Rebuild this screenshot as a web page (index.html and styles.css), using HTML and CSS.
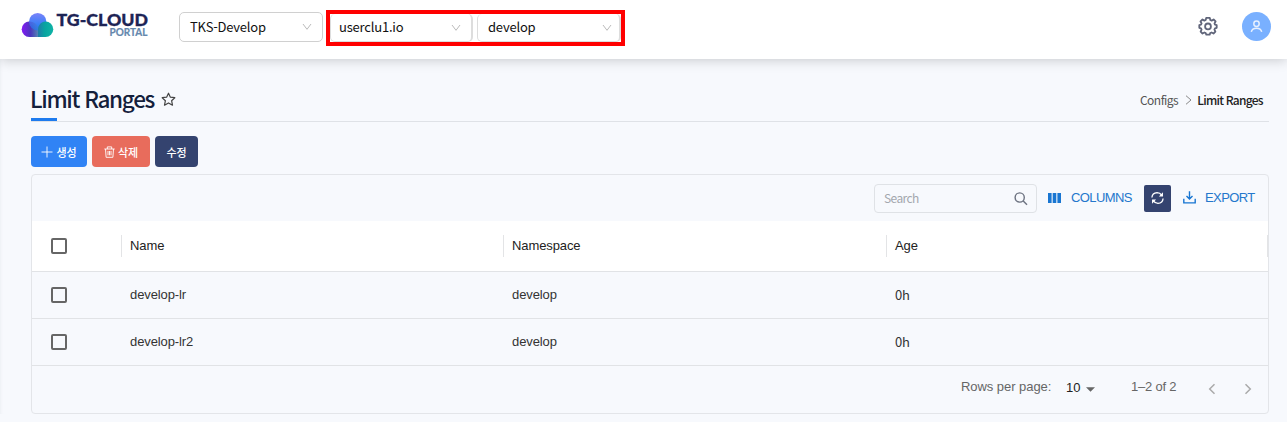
FILE: index.html
```html
<!DOCTYPE html>
<html lang="ko">
<head>
<meta charset="utf-8">
<title>Limit Ranges</title>
<link rel="stylesheet" href="styles.css">
</head>
<body>
<header class="topbar">
  <svg class="logo" width="128" height="32" viewBox="0 0 128 32">
    <defs>
      <linearGradient id="top" x1="0" y1="0" x2="0" y2="1"><stop offset="0" stop-color="#7b83fa"/><stop offset="1" stop-color="#167cf4"/></linearGradient>
      <linearGradient id="left" x1="0" y1="0" x2="1" y2="0"><stop offset="0" stop-color="#8418f5"/><stop offset=".55" stop-color="#4a38bc"/><stop offset="1" stop-color="#5686b4"/></linearGradient>
      <linearGradient id="right" x1="0" y1="0" x2="1" y2="0"><stop offset="0" stop-color="#217ba9"/><stop offset=".45" stop-color="#08a5a0"/><stop offset="1" stop-color="#10b3a6"/></linearGradient>
    </defs>
    <path d="M7.500 10.500h1.500c4 0 7 4 7 8V26H7.500a7.700 7.700 0 0 1 0-15.500Z" fill="url(#left)"/>
    <circle cx="15.700" cy="10.700" r="8.700" fill="url(#top)"/>
    <path d="M7.500 10.500c5 0 9 3.500 9 9V26h-9a7.700 7.700 0 0 1 0-15.500Z" fill="url(#left)" opacity=".35"/>
    <path d="M23.500 10.500a7.700 7.700 0 0 1 0 15.500H16v-7.500c0-4 3-8 7.500-8Z" fill="url(#right)"/>
    <text class="logo-name" x="34.500" y="14.500" textLength="91.500" lengthAdjust="spacingAndGlyphs">TG-CLOUD</text>
    <text class="logo-sub" x="87.500" y="25" textLength="38" lengthAdjust="spacingAndGlyphs">PORTAL</text>
  </svg>
  <div class="select project"><span>TKS-Develop</span><svg width="10" height="8" viewBox="0 0 10 8"><path d="M1 1l4 5.300L9 1"/></svg></div>
  <div class="scope">
    <div class="select cluster"><span>userclu1.io</span><svg width="10" height="8" viewBox="0 0 10 8"><path d="M1 1l4 5.300L9 1"/></svg></div>
    <div class="select"><span>develop</span><svg width="10" height="8" viewBox="0 0 10 8"><path d="M1 1l4 5.300L9 1"/></svg></div>
  </div>
  <svg class="gear" width="20" height="20" viewBox="0 0 20 20"><path d="M8.200 1.900h3.600l.5 2.100 1.400.6 1.900-1.100 2 2-1.100 1.900.5 1.300 1.700.5v2.600l-1.700.6-.6 1.300 1 1.900-1.900 1.900-1.900-1-1.400.6-.5 1.600H8.300l-.6-1.600-1.300-.6-1.900 1-1.900-1.900 1-1.900-.6-1.300-1.700-.6V9.200L3 8.700l.6-1.300-1.100-1.900 2-2 1.900 1.100L7.700 4Z"/><circle cx="10" cy="10.400" r="2.900"/></svg>
  <div class="avatar"><svg width="13" height="13" viewBox="0 0 14 14"><circle cx="7" cy="4" r="2.900"/><path d="M1.400 12.900c.5-2.500 2.900-4 5.600-4s5.100 1.500 5.600 4"/></svg></div>
</header>
<main class="content">
  <div class="heading">
    <h1>Limit Ranges</h1>
    <svg class="star" width="15" height="15" viewBox="0 0 15 15"><path d="M7.500 1.200l1.900 4 4.400.5-3.200 3 .9 4.500-4-2.300-4 2.300.9-4.500-3.200-3 4.400-.5Z"/></svg>
    <nav class="crumbs"><span>Configs</span><svg width="7" height="10" viewBox="0 0 7 10"><path d="M1 .7l5 4.300-5 4.300"/></svg><b>Limit Ranges</b></nav>
  </div>
  <div class="actions">
    <button class="btn create"><svg width="12" height="12" viewBox="0 0 12 12"><path d="M6 .5v11M.5 6h11"/></svg>생성</button>
    <button class="btn remove"><svg width="11" height="12" viewBox="0 0 11 12"><path d="M.3 3h10.400M3.300 3V.9h4.400V3M1.500 3l.6 8.300h6.800L9.500 3M4 5v4.300M5.500 5v4.300M7 5v4.300"/></svg>삭제</button>
    <button class="btn edit">수정</button>
  </div>
  <section class="card">
    <div class="tools">
      <div class="search"><span>Search</span><svg width="14" height="14" viewBox="0 0 14 14"><circle cx="5.700" cy="5.500" r="4.600"/><path d="M9 8.800l4 4"/></svg></div>
      <svg class="columns-icon" width="13" height="10" viewBox="0 0 13 10"><path d="M0 0h3.600v10H0zM4.700 0h3.600v10H4.700zM9.400 0H13v10H9.400z"/></svg>
      <span class="link columns">COLUMNS</span>
      <div class="refresh"><svg width="14" height="14" viewBox="0 0 14 14"><path d="M1 6.500C1.200 3.500 3.600 1.400 6.500 1.200c2.200 0 3.800.9 5 2.600M13 7.500c-.2 3-2.600 5.100-5.500 5.300-2.200 0-3.800-.9-5-2.600"/><path class="tip" d="M12.900.8v4.500H8.500ZM1.100 13.200V8.700h4.400Z"/></svg></div>
      <svg class="export-icon" width="13" height="13" viewBox="0 0 13 13"><path d="M6.500.3v7.500M3.500 5l3 3 3-3M.8 7.700v4.200h11.400V7.700"/></svg>
      <span class="link export">EXPORT</span>
    </div>
    <div class="row head"><i class="box"></i><div class="cell">Name</div><div class="cell">Namespace</div><div class="cell last">Age</div></div>
    <div class="row"><i class="box"></i><div class="cell">develop-lr</div><div class="cell">develop</div><div class="cell age">0h</div></div>
    <div class="row"><i class="box"></i><div class="cell">develop-lr2</div><div class="cell">develop</div><div class="cell age">0h</div></div>
    <div class="pager">
      <span class="label">Rows per page:</span><span class="size">10</span>
      <svg class="caret" width="9" height="5" viewBox="0 0 10 5"><path d="M0 0h10L5 5Z"/></svg>
      <span class="range">1–2 of 2</span>
      <svg class="arrow" width="8" height="12" viewBox="0 0 8 12"><path d="M6.500 1.200L1.700 6l4.800 4.800"/></svg>
      <svg class="arrow next" width="8" height="12" viewBox="0 0 8 12"><path d="M1.500 1.200L6.300 6l-4.800 4.800"/></svg>
    </div>
  </section>
</main>
</body>
</html>
```
FILE: styles.css
```css
* { box-sizing: border-box; }
body { margin: 0; height: 422px; overflow: hidden; background: #f7f9fd; font-family: "Noto Sans CJK KR", sans-serif; color: #222; }
svg { flex: none; fill: none; overflow: visible; }
.topbar { position: relative; display: flex; align-items: flex-start; height: 59px; padding-left: 22px; background: #fff; box-shadow: 0 1px 12px rgba(0,0,0,.2); }
.logo { margin-top: 11px; }
.logo-name { font: 900 17px Lato, sans-serif; fill: #1d2455; stroke: #1d2455; stroke-width: .3px; }
.logo-sub { font: 700 10.500px Lato, sans-serif; fill: #6487ad; stroke: #6487ad; stroke-width: .2px; }
.select { display: flex; align-items: center; justify-content: space-between; width: 144px; height: 30px; padding: 0 10px; border: 1px solid #d0d0d0; border-radius: 5px; background: #fff; font-size: 13px; letter-spacing: -.2px; color: #111; }
.select span { padding-bottom: 2px; }
.select svg { stroke: #bbb; }
.project { margin: 12px 0 0 29px; }
.scope { display: flex; gap: 4px; width: 299px; height: 36px; margin: 10px 0 0 3px; border: 4px solid #f00; }
.scope .select { height: 28px; border-width: 0 2px 1px 1px; border-color: #ddd; }
.scope .cluster { width: 143px; padding-left: 8px; }
.scope .select:last-child { padding-right: 7px; }
.gear { margin: 16px 0 0 573px; stroke: #60657a; stroke-width: 1.800; stroke-linejoin: round; }
.avatar { display: flex; align-items: center; justify-content: center; width: 29px; height: 29px; margin: 12px 0 0 24px; border-radius: 50%; background: #79b0ff; }
.avatar svg { stroke: #e6f0ff; stroke-width: 1.600; }
.content { padding: 19px 18px 0 31px; box-shadow: inset 3px 0 3px -2px #edf0f4; }
.heading { position: relative; display: flex; height: 44px; align-items: center; border-bottom: 1px solid #dfe2e7; }
.heading::after { content: ""; position: absolute; left: 0; bottom: 0; width: 26px; height: 3px; background: #1e7bee; }
h1 { width: 124px; margin: -4px 0 0 -1px; font-size: 22.5px; line-height: 40px; font-weight: 500; letter-spacing: -1.3px; white-space: nowrap; color: #14203b; }
.star { margin-left: 7px; stroke: #444; stroke-width: 1.200; stroke-linejoin: round; }
.crumbs { display: flex; align-items: center; margin-left: auto; padding-right: 7px; font-size: 12px; letter-spacing: -.5px; color: #555; }
.crumbs svg { margin: 0 5px 0 7px; stroke: #888; }
.crumbs b { font-weight: 500; letter-spacing: -.75px; margin-right: -.75px; color: #222; }
.actions { display: flex; gap: 5px; margin: 14px 0 7px; }
.btn { display: flex; align-items: center; justify-content: center; gap: 3px; height: 31px; padding: 0; border: 0; border-radius: 4px; color: #fff; font: 500 11px "Noto Sans CJK KR", sans-serif; }
.btn svg { stroke: #fff; stroke-width: .9; }
.create { width: 56px; background: #3083f5; }
.remove { width: 58px; background: #e86c5c; }
.edit { width: 43px; background: #34436f; }
.card { height: 240px; border: 1px solid #e3e5e9; border-radius: 4px; }
.tools { display: flex; align-items: center; height: 46px; padding-left: 842px; }
.search { display: flex; align-items: center; justify-content: space-between; width: 163px; height: 29px; margin-top: 1px; padding: 0 8px 0 9px; border: 1px solid #dfe2e6; border-radius: 4px; font-size: 12px; letter-spacing: -.6px; color: #a3a7ae; }
.search span { padding-bottom: 2px; }
.search svg { stroke: #6c7280; stroke-width: 1.400; }
.columns-icon { margin-left: 11px; fill: #1976d2; }
.link { margin-top: -1px; font: 13px "Liberation Sans", sans-serif; color: #2477cc; }
.columns { width: 73px; margin-left: 10px; letter-spacing: -.6px; }
.refresh { display: flex; align-items: center; justify-content: center; width: 27px; height: 27px; border-radius: 2px; background: #34436f; }
.refresh svg { width: 13px; stroke: #fff; stroke-width: 1.400; }
.refresh .tip { fill: #fff; stroke: none; }
.export-icon { margin: -1px 0 0 12px; stroke: #1976d2; stroke-width: 1.400; }
.export { margin-left: 9px; letter-spacing: -.6px; }
.row { display: grid; grid-template-columns: 90px 382px 383px 1fr; align-items: center; height: 47px; border-bottom: 1px solid #e1e3e6; font: 13px "Liberation Sans", sans-serif; letter-spacing: -.1px; color: #333; }
.head { height: 51px; background: #fff; color: #222; }
.box { width: 16px; height: 16px; margin-left: 19px; border: 2px solid #666; border-radius: 2px; }
.cell { padding: 0 0 2px 8px; }
.head .cell { height: 22px; margin-left: -1px; padding-bottom: 0; line-height: 22px; border-left: 1px solid #e3e4e6; }
.head .last { border-right: 1px solid #e3e4e6; }
.age { font: 13px "Noto Sans CJK KR", sans-serif; }
.pager { display: flex; align-items: center; height: 43px; padding-left: 929px; font: 13px "Liberation Sans", sans-serif; letter-spacing: -.05px; color: #666; }
.label { width: 105px; margin-top: -2px; }
.size { width: 20px; color: #222; }
.caret { margin-top: 3px; fill: #666; }
.range { width: 77px; margin: -2px 0 0 36px; letter-spacing: -.2px; }
.arrow { margin-top: 3px; stroke: #aaa; stroke-width: 1.500; }
.next { margin-left: 28px; }
```
